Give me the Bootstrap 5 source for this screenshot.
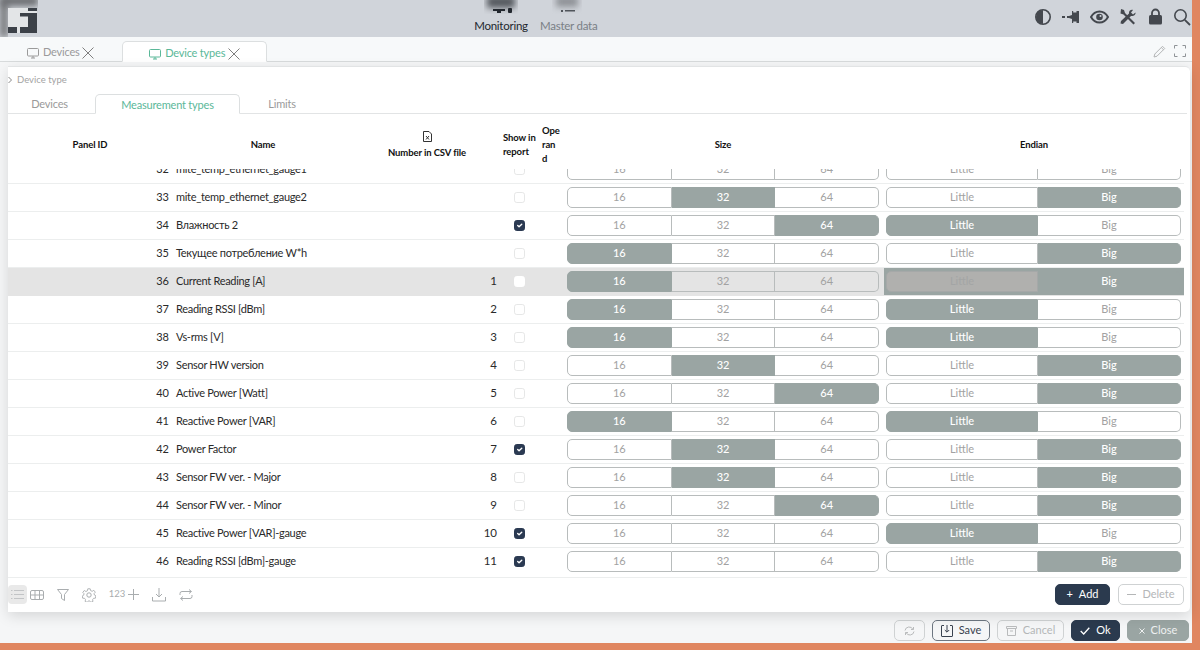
<!DOCTYPE html>
<html lang="en">
<head>
    <meta charset="UTF-8" />
    <meta name="viewport" content="width=device-width, initial-scale=1" />
    <title>Device types</title>
    <link href="https://cdn.jsdelivr.net/npm/bootstrap@5.3.3/dist/css/bootstrap.min.css" rel="stylesheet" />
    <style>
        html, body {
            height: 100%;
            overflow: hidden;
        }

        body {
            background: #e08660;
            font-family: "Lato", "Liberation Sans", sans-serif;
            font-size: 11px;
            color: #222;
        }

        .app-frame {
            width: 1192px;
            height: 643px;
            background: #f5f6f7;
        }

        /* top bar */
        .top-bar {
            height: 37px;
            background: #d0d4da;
            overflow: hidden;
        }

        .logo-box {
            width: 38px;
            height: 37px;
        }

        .blur-patch {
            filter: blur(3px);
        }

        .top-nav {
            margin-left: 436px;
            gap: 12px;
        }

        .top-nav-item {
            width: 54px;
            text-align: center;
            font-size: 11.5px;
            letter-spacing: -.25px;
            color: #7a8086;
            white-space: nowrap;
        }

        .top-nav-item.current {
            color: #22272e;
        }

        .top-nav-item svg {
            display: block;
            margin: 0 auto 3px;
        }

        .top-icons {
            height: 33px;
            gap: 10.5px;
            padding-right: 1px;
        }

        /* window tabs */
        .win-tabs {
            height: 25px;
            background: #f7f9fa;
            padding: 4px 6px 0 27px;
            border-bottom: 1px solid #d8dbdc;
        }

        .win-tabs .nav-link, .inner-tabs .nav-link {
            font-size: 11px;
            letter-spacing: -.2px;
            color: #9a9a9a;
            padding: 0;
            height: 21px;
            line-height: 21px;
            text-align: center;
            border-radius: 5px 5px 0 0;
        }

        .win-tabs .nav-link.active, .inner-tabs .nav-link.active {
            color: #5bb899;
            background: #fff;
            border-color: #dcdfe0 #dcdfe0 #fff;
        }

        .win-tab-plain {
            width: 95px;
            text-align: left !important;
        }

        .win-tab-current {
            width: 145px;
        }

        .tab-tail {
            gap: 8px;
            height: 20px;
        }

        /* card */
        .main-card {
            width: 1182px;
            height: 546px;
            margin: 4px 0 0 8px;
            border-radius: 0 5px 5px 0;
            border: 0;
            border-top: 1px solid #e2e4e5;
            box-shadow: 0 4px 14px rgba(0, 0, 0, .13);
        }

        .crumb {
            height: 27px;
            padding-top: 6px;
            color: #a3a3a3;
            font-size: 9.5px;
            line-height: 14px;
            flex-shrink: 0;
        }

        .inner-tabs {
            height: 20px;
            padding-left: 0;
            margin-right: 3px;
            border-bottom: 1px solid #e2e4e5;
            flex-shrink: 0;
        }

        .inner-tabs .nav-link {
            height: 20px;
            line-height: 19px;
        }

        .inner-tab-a { width: 87px; padding-right: 4px !important; }
        .inner-tab-b { width: 145px; }
        .inner-tab-c { width: 84px; }

        /* table */
        .rows-scroll {
            width: 1176px;
            height: 460px;
            overflow: hidden;
            flex-shrink: 0;
        }

        .mt-grid {
            table-layout: fixed;
            width: 1176px;
            margin: 0;
            font-size: 11px;
        }

        .col-panel { width: 164px; }
        .col-name { width: 182px; }
        .col-csv { width: 146px; }
        .col-show { width: 40px; }
        .col-operand { width: 22px; }
        .col-size { width: 322px; }
        .col-endian { width: 300px; }

        .mt-grid thead th {
            position: sticky;
            top: 0;
            z-index: 2;
            height: 55px;
            padding: 8px 0 0;
            background: #fff;
            font-size: 9.5px;
            letter-spacing: -.1px;
            line-height: 14px;
            font-weight: 700;
            color: #111;
            text-align: center;
            vertical-align: middle;
            border-bottom: 1px solid #eceeee;
        }

        .mt-grid thead th.head-left {
            text-align: left;
            padding-left: 3px;
        }

        .mt-grid thead th.head-operand {
            padding-left: 2px;
        }

        .mt-grid tbody td {
            height: 28px;
            padding: 0 3px;
            vertical-align: middle;
            color: #2a2a2a;
            border-bottom: 1px solid #eceeee;
            white-space: nowrap;
        }

        .mt-grid tbody tr.row-hover td {
            background: #e4e4e4;
            border-bottom-color: #e4e4e4;
        }

        .mt-grid tbody tr.row-hover .seg-btn:not(.seg-on) {
            background: #e4e4e4;
        }

        .mt-grid tbody tr.row-hover td.cell-endian {
            background: #9aa5a3;
        }

        .mt-grid tbody tr.row-hover .cell-endian .seg-btn:not(.seg-on) {
            background: #b0b0ae;
            color: #a3a5a5;
            border-color: #a5a8a8;
        }

        .mt-grid tbody tr.row-hover .cell-endian .seg-btn.seg-on {
            border-color: #9aa5a3;
        }

        .mt-grid tbody tr.row-hover .box-check {
            border-color: #fff;
        }

        .mt-grid tbody td.cell-id { text-align: right; padding-right: 3px; }
        .mt-grid tbody td.cell-num { text-align: right; padding-right: 3px; font-size: 11.5px; }
        .mt-grid tbody td.cell-name { padding-left: 4px; letter-spacing: -.3px; font-size: 11px; }
        .mt-grid tbody td.cell-check { padding-left: 14px; }
        .mt-grid tbody td.cell-size { padding: 0 5px; }
        .mt-grid tbody td.cell-endian { padding: 0 3px 0 2px; }

        .seg-group {
            display: flex;
            width: 100%;
            height: 21px;
        }

        .seg-btn {
            flex: 1 1 0;
            min-width: 0;
            padding: 0;
            font-size: 11px;
            line-height: 18px;
            color: #a2a2a2;
            background: #fff;
            border: 1px solid #b8bcbc;
            border-left-width: 0;
            border-radius: 0;
        }

        .seg-btn:first-child {
            border-left-width: 1px;
            border-radius: 5px 0 0 5px;
        }

        .seg-btn:last-child {
            border-radius: 0 5px 5px 0;
        }

        .cell-endian .seg-btn:first-child {
            flex: 0 0 152px;
        }

        .seg-btn.seg-on {
            background: #9aa5a3;
            border-color: #9aa5a3;
            color: #fff;
            font-weight: 500;
        }

        .box-check {
            display: block;
            width: 11px;
            height: 11px;
            margin: 0;
            border: 1px solid #e6e7e7;
            border-radius: 3px;
        }

        .box-check:checked {
            background-color: #2b3a52;
            border-color: #2b3a52;
        }

        /* toolbar under the table */
        .table-foot {
            height: 35px;
            margin-top: 3px;
            margin-right: 3px;
            border-top: 1px solid #eceeee;
            padding: 6px 3px 0 0;
            flex-shrink: 0;
        }

        .tool-icons {
            gap: 3px;
            color: #a9adaf;
        }

        .tool-btn {
            display: flex;
            align-items: center;
            justify-content: center;
            height: 19px;
            margin-top: 1px;
            font-size: 9.5px;
        }

        .tool-btn.tool-on {
            width: 19px;
            background: #e9e9e9;
            border-radius: 4px;
        }

        .tool-gap {
            margin-left: 10px;
        }

        .tool-num {
            width: 16px;
        }

        .act-btn {
            display: inline-flex;
            align-items: center;
            justify-content: center;
            gap: 6px;
            height: 21px;
            padding: 0;
            font-size: 11px;
            border-radius: 5px;
        }

        .act-dark {
            background: #2b3a4e;
            border: 1px solid #2b3a4e;
            color: #fff;
        }

        .act-line {
            background: #fff;
            border: 1px solid #cfd2d3;
            color: #b4b6b7;
        }

        .act-strong {
            border-color: #6d7681;
            color: #3a4350;
        }

        .act-mute {
            background: #9aa5a3;
            border: 1px solid #9aa5a3;
            color: #eef0f0;
        }

        .w-add { width: 55px; }
        .w-delete { width: 66px; }
        .w-sync { width: 31px; }
        .w-save { width: 58px; }
        .w-cancel { width: 67px; }
        .w-ok { width: 49px; }
        .w-close { width: 62px; }

        .page-foot {
            height: 31px;
            padding: 8px 3px 0 0;
            gap: 7px;
        }

        .page-foot .act-line {
            background: #f5f6f7;
        }
    </style>
</head>
<body class="m-0">

    <div class="app-frame d-flex flex-column">

        <!-- Top bar -->
        <header class="top-bar d-flex align-items-start flex-shrink-0">
            <svg class="logo-box flex-shrink-0" viewBox="0 0 38 37">
                <rect width="8" height="37" fill="#77797c" class="blur-patch" />
                <rect y="-4" width="38" height="10" fill="#6c6e72" class="blur-patch" />
                <rect x="8" y="8" width="29" height="29" fill="#e3e5e7" />
                <rect x="8" y="27" width="9" height="6" fill="#3c4148" />
                <rect x="20" y="27" width="8" height="6" fill="#3c4148" />
                <rect x="20" y="13" width="17" height="3.500" fill="#3c4148" />
                <rect x="28" y="13" width="9" height="20" fill="#3c4148" />
                <rect x="28" y="8" width="9" height="3" fill="#3c4148" />
                <rect x="8" y="33" width="29" height="4" fill="#d0d4da" />
            </svg>
            <nav class="top-nav d-flex">
                <div class="top-nav-item current">
                    <svg width="34" height="14" viewBox="0 0 34 14">
                        <rect x="3" y="-4" width="28" height="12" fill="#55595f" class="blur-patch" />
                        <rect x="9" y="9" width="12" height="2" fill="#22272e" />
                        <rect x="13" y="11" width="4" height="2" fill="#22272e" />
                        <rect x="24" y="8" width="4" height="5" rx="1" fill="#22272e" />
                    </svg>
                    Monitoring
                </div>
                <div class="top-nav-item">
                    <svg width="30" height="14" viewBox="0 0 30 14">
                        <rect x="4" y="-4" width="22" height="11" fill="#8f9297" class="blur-patch" />
                        <rect x="9" y="10" width="2" height="2" fill="#50555b" />
                        <rect x="13" y="10" width="10" height="1.500" fill="#50555b" />
                    </svg>
                    Master data
                </div>
            </nav>
            <div class="top-icons d-flex align-items-center ms-auto">
                <svg width="18" height="18" viewBox="0 0 18 18"><circle cx="9" cy="9" r="7.200" fill="none" stroke="#44484e" stroke-width="1.600" /><path d="M9 2a7 7 0 0 0 0 14z" fill="#44484e" /></svg>
                <svg width="17" height="14" viewBox="0 0 17 14"><path d="M0 6h3v2H0zM5 6h2l3-1V1h1.200v12H10V9L7 8H5zM11 2.500h3.500V1H17v12h-2.500v-1.500H11z" fill="#44484e" /></svg>
                <svg width="19" height="14" viewBox="0 0 19 14"><path d="M1 7c2-3.600 5-5.500 8.500-5.500S16 3.400 18 7c-2 3.600-5 5.500-8.500 5.500S3 10.600 1 7z" fill="none" stroke="#44484e" stroke-width="2" /><circle cx="9.500" cy="7" r="3.300" fill="#44484e" /><circle cx="10.500" cy="6" r="1" fill="#d0d4da" /></svg>
                <svg width="18" height="18" viewBox="0 0 18 18"><path d="M2 1l3 1 1 3 10 10-1.500 1.500L4.500 6.500l-3-1z" fill="#44484e" /><path d="M16.500 4.500l-2.500 2-2-2 2-2.500c-2.200-.6-4.500 1-4 3.500L2 13l-.5 2.500L4 16l8-8c2.500.5 5-1.500 4.500-3.500z" fill="#44484e" /></svg>
                <svg width="15" height="17" viewBox="0 0 15 17"><path d="M4 7V5a3.500 3.500 0 0 1 7 0v2" fill="none" stroke="#44484e" stroke-width="1.800" /><rect x="1" y="7" width="13" height="9.500" rx="1.500" fill="#44484e" /></svg>
                <svg width="18" height="18" viewBox="0 0 18 18"><circle cx="7.500" cy="7.500" r="5.700" fill="none" stroke="#44484e" stroke-width="1.600" /><path d="M11.800 11.800L17 17" stroke="#44484e" stroke-width="1.800" /></svg>
            </div>
        </header>

        <!-- Window tabs -->
        <div class="win-tabs d-flex flex-shrink-0">
            <ul class="nav nav-tabs border-0 flex-grow-1">
                <li class="nav-item">
                    <a class="nav-link win-tab-plain border-0" href="#">
                        <svg width="12" height="11" viewBox="0 0 12 11" class="me-1"><rect x=".5" y=".5" width="11" height="7.500" rx="1" fill="none" stroke="#9a9a9a" /><path d="M4 10h4M6 8v2" stroke="#9a9a9a" /></svg>Devices
                        <svg width="12" height="12" viewBox="0 0 12 12"><path d="M.5.500l11 11m0-11l-11 11" stroke="#7f7f7f" /></svg>
                    </a>
                </li>
                <li class="nav-item">
                    <a class="nav-link win-tab-current active" href="#">
                        <svg width="12" height="11" viewBox="0 0 12 11" class="me-1"><rect x=".5" y=".5" width="11" height="7.500" rx="1" fill="none" stroke="#5bb899" /><path d="M4 10h4M6 8v2" stroke="#5bb899" /></svg>Device types
                        <svg width="12" height="12" viewBox="0 0 12 12"><path d="M.5.500l11 11m0-11l-11 11" stroke="#7f7f7f" /></svg>
                    </a>
                </li>
            </ul>
            <div class="tab-tail d-flex align-items-center">
                <svg width="13" height="13" viewBox="0 0 13 13"><path d="M1 12l.8-3L9.500 1.300l2.200 2.200L4 11.200zM8.300 2.500l2.200 2.200" fill="none" stroke="#b3b5b6" /></svg>
                <svg width="12" height="12" viewBox="0 0 12 12"><path d="M.5 3.500v-3h3M8.500.5h3v3M11.500 8.500v3h-3M3.500 11.500h-3v-3" fill="none" stroke="#8f9397" /></svg>
            </div>
        </div>

        <!-- Main card -->
        <div class="main-card card flex-shrink-0">
            <div class="crumb d-flex align-items-start gap-1">
                <svg width="5" height="14" viewBox="0 0 5 14"><path d="M.5 4l3 3-3 3" fill="none" stroke="#888" /></svg>
                Device type
            </div>
            <ul class="inner-tabs nav nav-tabs">
                <li class="nav-item"><a class="nav-link inner-tab-a border-0" href="#">Devices</a></li>
                <li class="nav-item"><a class="nav-link inner-tab-b active" href="#">Measurement types</a></li>
                <li class="nav-item"><a class="nav-link inner-tab-c border-0" href="#">Limits</a></li>
            </ul>

            <div class="rows-scroll" id="rowsScroll">
                <table class="mt-grid table">
                    <colgroup>
                        <col class="col-panel" />
                        <col class="col-name" />
                        <col class="col-csv" />
                        <col class="col-show" />
                        <col class="col-operand" />
                        <col class="col-size" />
                        <col class="col-endian" />
                    </colgroup>
                    <thead>
                        <tr>
                            <th>Panel ID</th>
                            <th>Name</th>
                            <th>
                                <svg width="9" height="11" viewBox="0 0 9 11" class="d-block mx-auto mb-1"><path d="M.5.500h5.500l2.500 2.500v7.500h-8z" fill="none" stroke="#333" /><path d="M3 5l3 3.500M6 5L3 8.500" stroke="#333" /></svg>
                                Number in CSV file
                            </th>
                            <th class="head-left">Show in report</th>
                            <th class="head-left head-operand">Ope ran d</th>
                            <th>Size</th>
                            <th>Endian</th>
                        </tr>
                    </thead>
                    <tbody id="measureRows"></tbody>
                </table>
            </div>

            <div class="table-foot d-flex justify-content-between">
                <div class="tool-icons d-flex">
                    <span class="tool-btn tool-on"><svg width="13" height="11" viewBox="0 0 13 11"><path d="M3 1.500h10M3 5.500h10M3 9.500h10M0 1.500h1.500M0 5.500h1.500M0 9.500h1.500" stroke="#c2c4c6" /></svg></span>
                    <span class="tool-btn"><svg width="14" height="10" viewBox="0 0 14 10"><rect x=".5" y=".5" width="13" height="9" rx="1.500" fill="none" stroke="#a9adaf" /><path d="M.5 5h13M5 .5v9M9.500.5v9" stroke="#a9adaf" /></svg></span>
                    <span class="tool-btn tool-gap"><svg width="12" height="12" viewBox="0 0 12 12"><path d="M.5.500h11l-4 5v6l-3-2v-4z" fill="none" stroke="#a9adaf" /></svg></span>
                    <span class="tool-btn tool-gap"><svg width="14" height="14" viewBox="0 0 14 14"><circle cx="7" cy="7" r="2.200" fill="none" stroke="#a9adaf" /><path d="M5.800.8h2.400l.4 1.800 1.600.7 1.600-1 1.500 1.900-1.200 1.300.3 1.500 1.500.8-.5 2.400-1.800.1-1 1.300.4 1.800-2.200 1-1.100-1.500H6.400l-1.100 1.500-2.200-1 .4-1.800-1-1.300-1.800-.1L.2 8l1.500-.8L2 5.700.8 4.400l1.500-1.900 1.600 1 1.500-.7z" fill="none" stroke="#a9adaf" stroke-width=".9" /></svg></span>
                    <span class="tool-btn tool-num tool-gap">123</span>
                    <span class="tool-btn"><svg width="11" height="11" viewBox="0 0 11 11"><path d="M5.500 0v11M0 5.500h11" stroke="#a9adaf" /></svg></span>
                    <span class="tool-btn tool-gap"><svg width="14" height="14" viewBox="0 0 14 14"><path d="M7 0v9M4 6l3 3 3-3M.5 9v4h13V9" fill="none" stroke="#a9adaf" /></svg></span>
                    <span class="tool-btn tool-gap"><svg width="14" height="12" viewBox="0 0 14 12"><path d="M1 6V4.500a2 2 0 0 1 2-2h9M10 .5l2.500 2L10 4.500M13 6v1.500a2 2 0 0 1-2 2H2M4 7.500l-2.500 2 2.500 2" fill="none" stroke="#a9adaf" /></svg></span>
                </div>
                <div class="d-flex gap-2 align-items-start">
                    <button type="button" class="act-btn act-dark w-add"><span>+</span> Add</button>
                    <button type="button" class="act-btn act-line w-delete"><svg width="9" height="1" viewBox="0 0 9 1"><path d="M0 .5h9" stroke="#b4b6b7" /></svg> Delete</button>
                </div>
            </div>
        </div>

        <!-- Page buttons -->
        <div class="page-foot d-flex justify-content-end flex-shrink-0">
            <button type="button" class="act-btn act-line w-sync"><svg width="11" height="10" viewBox="0 0 11 10"><path d="M1 4.500a4.200 4.200 0 0 1 8-1M10 5.500a4.200 4.200 0 0 1-8 1M9.500 1v2.500H7M1.500 9V6.500H4" fill="none" stroke="#b9bbbc" /></svg></button>
            <button type="button" class="act-btn act-line act-strong w-save"><svg width="12" height="12" viewBox="0 0 12 12"><path d="M3 .5H1a.5.5 0 0 0-.5.500v10a.5.5 0 0 0 .5.500h10a.5.5 0 0 0 .5-.500V1a.5.5 0 0 0-.5-.500H9M6 0v7M3.800 5L6 7.200 8.200 5" fill="none" stroke="#3a4350" /></svg> Save</button>
            <button type="button" class="act-btn act-line w-cancel"><svg width="11" height="10" viewBox="0 0 11 10"><path d="M.5.500h10v2H.5zM1.500 2.500v7h8v-7M4 5h3" fill="none" stroke="#b9bbbc" /></svg> Cancel</button>
            <button type="button" class="act-btn act-dark w-ok"><svg width="10" height="8" viewBox="0 0 10 8"><path d="M.7 4l3 3L9.300.8" fill="none" stroke="#fff" stroke-width="1.300" /></svg> Ok</button>
            <button type="button" class="act-btn act-mute w-close"><svg width="6" height="6" viewBox="0 0 6 6"><path d="M.5.500l5 5m0-5l-5 5" stroke="#eef0f0" /></svg> Close</button>
        </div>
    </div>

    <script src="https://cdn.jsdelivr.net/npm/bootstrap@5.3.3/dist/js/bootstrap.bundle.min.js"></script>
    <script>
    // id, name, csv number, show in report, size, endian
    const measureTypes = [
      [32, 'mite_temp_ethernet_gauge1', '', false, 0, ''],
      [33, 'mite_temp_ethernet_gauge2', '', false, 32, 'Big'],
      [34, 'Влажность 2', '', true, 64, 'Little'],
      [35, 'Текущее потребление W*h', '', false, 16, 'Big'],
      [36, 'Current Reading [A]', 1, false, 16, 'Big'],
      [37, 'Reading RSSI [dBm]', 2, false, 16, 'Little'],
      [38, 'Vs-rms [V]', 3, false, 16, 'Little'],
      [39, 'Sensor HW version', 4, false, 32, 'Big'],
      [40, 'Active Power [Watt]', 5, false, 64, 'Big'],
      [41, 'Reactive Power [VAR]', 6, false, 16, 'Little'],
      [42, 'Power Factor', 7, true, 32, 'Big'],
      [43, 'Sensor FW ver. - Major', 8, false, 32, 'Big'],
      [44, 'Sensor FW ver. - Minor', 9, false, 64, 'Big'],
      [45, 'Reactive Power [VAR]-gauge', 10, true, 0, 'Little'],
      [46, 'Reading RSSI [dBm]-gauge', 11, true, 0, 'Big']
    ];

    function segments(options, current) {
      const btns = options.map(o =>
        `<button type="button" class="seg-btn ${o === current ? 'seg-on' : ''}">${o}</button>`).join('');
      return `<div class="seg-group">${btns}</div>`;
    }

    document.getElementById('measureRows').innerHTML = measureTypes.map(([id, name, num, show, size, endian]) => `
      <tr class="${id === 36 ? 'row-hover' : ''}">
        <td class="cell-id">${id}</td>
        <td class="cell-name">${name}</td>
        <td class="cell-num">${num}</td>
        <td class="cell-check"><input class="form-check-input box-check" type="checkbox" ${show ? 'checked' : ''} /></td>
        <td></td>
        <td class="cell-size">${segments([16, 32, 64], size)}</td>
        <td class="cell-endian">${segments(['Little', 'Big'], endian)}</td>
      </tr>`).join('');

    // The list is scrolled a little, row 32 sits half under the header
    document.getElementById('rowsScroll').scrollTop = 14;
    </script>
</body>
</html>
